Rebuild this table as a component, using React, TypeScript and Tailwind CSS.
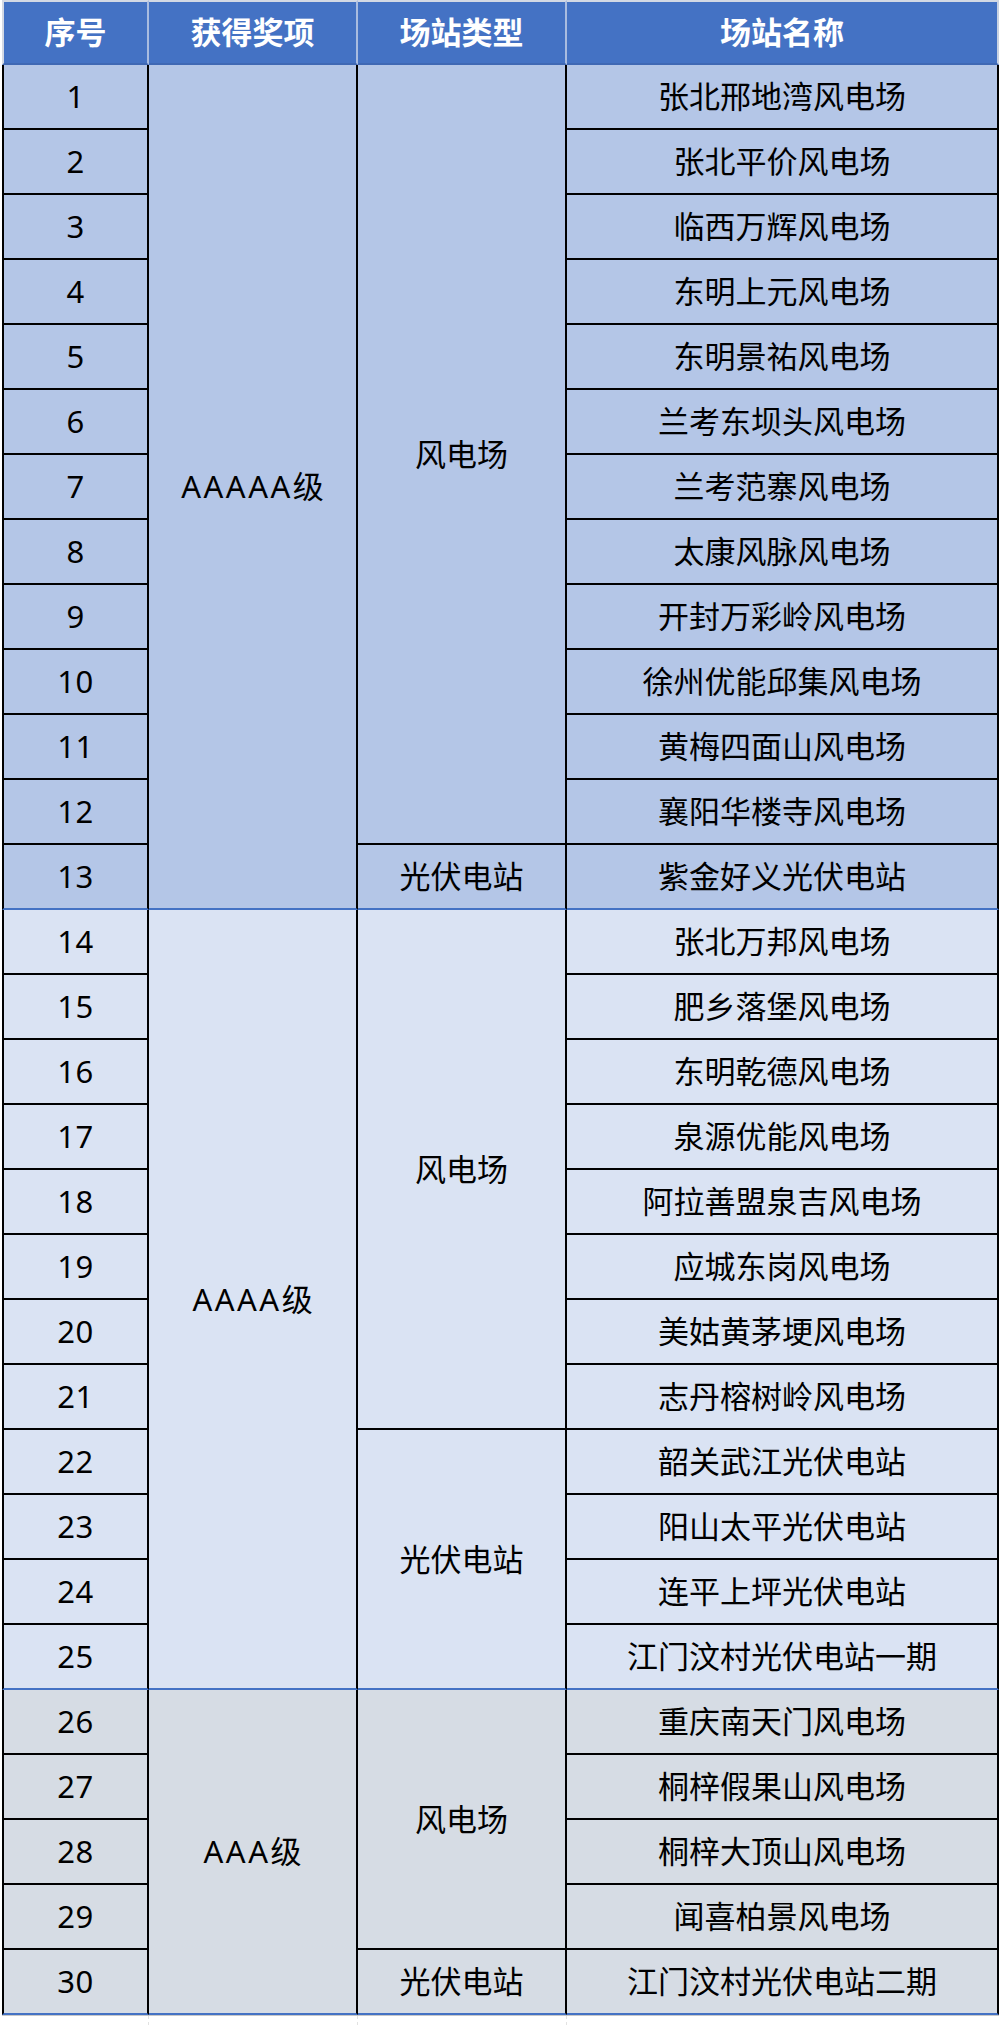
import React from 'react';

type TypeGroup = { t: string; span: string; names: string[] };
type Group = { award: string; bg: string; span: string; types: TypeGroup[] };

const groups: Group[] = [
  {
    award: 'AAAAA',
    bg: 'bg-[#b4c6e7]',
    span: 'row-span-13',
    types: [
      {
        t: '风电场',
        span: 'row-span-12',
        names: [
          '张北邢地湾风电场',
          '张北平价风电场',
          '临西万辉风电场',
          '东明上元风电场',
          '东明景祐风电场',
          '兰考东坝头风电场',
          '兰考范寨风电场',
          '太康风脉风电场',
          '开封万彩岭风电场',
          '徐州优能邱集风电场',
          '黄梅四面山风电场',
          '襄阳华楼寺风电场',
        ],
      },
      { t: '光伏电站', span: 'row-span-1', names: ['紫金好义光伏电站'] },
    ],
  },
  {
    award: 'AAAA',
    bg: 'bg-[#dae3f3]',
    span: 'row-span-12',
    types: [
      {
        t: '风电场',
        span: 'row-span-8',
        names: [
          '张北万邦风电场',
          '肥乡落堡风电场',
          '东明乾德风电场',
          '泉源优能风电场',
          '阿拉善盟泉吉风电场',
          '应城东岗风电场',
          '美姑黄茅埂风电场',
          '志丹榕树岭风电场',
        ],
      },
      {
        t: '光伏电站',
        span: 'row-span-4',
        names: ['韶关武江光伏电站', '阳山太平光伏电站', '连平上坪光伏电站', '江门汶村光伏电站一期'],
      },
    ],
  },
  {
    award: 'AAA',
    bg: 'bg-[#d6dce4]',
    span: 'row-span-5',
    types: [
      {
        t: '风电场',
        span: 'row-span-4',
        names: ['重庆南天门风电场', '桐梓假果山风电场', '桐梓大顶山风电场', '闻喜柏景风电场'],
      },
      { t: '光伏电站', span: 'row-span-1', names: ['江门汶村光伏电站二期'] },
    ],
  },
];

const cellBase = 'flex items-center justify-center border-b-2 border-r-2 border-r-black';

export default function App() {
  const cells: React.ReactNode[] = [];
  let seq = 0;
  groups.forEach((g, gi) => {
    const groupTotal = g.types.reduce((a, t) => a + t.names.length, 0);
    let inGroup = 0;
    g.types.forEach((tg, ti) => {
      tg.names.forEach((name, ni) => {
        seq += 1;
        inGroup += 1;
        const lastInGroup = inGroup === groupTotal;
        const bottom = lastInGroup ? 'border-b-[#4472c4]' : 'border-b-black';
        cells.push(
          <div key={`s${seq}`} className={`${cellBase} ${bottom} ${g.bg} col-start-1 border-l-2 border-l-black`}>
            <span className="tracking-[0.5px]">{seq}</span>
          </div>
        );
        if (ti === 0 && ni === 0) {
          cells.push(
            <div key={`a${gi}`} className={`${cellBase} border-b-[#4472c4] ${g.bg} col-start-2 ${g.span}`}>
              <span className="tracking-[2.5px]">{g.award}</span>
              <span>级</span>
            </div>
          );
        }
        if (ni === 0) {
          const typeLast = ti === g.types.length - 1;
          cells.push(
            <div
              key={`t${gi}-${ti}`}
              className={`${cellBase} ${typeLast ? 'border-b-[#4472c4]' : 'border-b-black'} ${g.bg} col-start-3 ${tg.span}`}
            >
              {tg.t}
            </div>
          );
        }
        cells.push(
          <div key={`n${seq}`} className={`${cellBase} ${bottom} ${g.bg} col-start-4`}>
            {name}
          </div>
        );
      });
    });
  });

  const headers = ['序号', '获得奖项', '场站类型', '场站名称'];

  return (
    <div
      className="w-[1000px] h-[2025px] bg-white text-black text-[31px] leading-none"
      style={{ fontFamily: '"Noto Sans", "Noto Sans CJK SC", sans-serif' }}
    >
      <div className="ml-[2px] grid w-[997px] grid-cols-[147px_209px_209px_432px] auto-rows-[65px]">
        {headers.map((h, i) => (
          <div
            key={h}
            className={`flex items-center justify-center bg-[#4472c4] font-bold text-white border-t-2 border-t-[#d3d9e4] border-b-2 border-b-[#3f68b4] border-r-2 ${
              i === 3 ? 'border-r-[#c9d2e2]' : 'border-r-[#a9bce0]'
            } ${i === 0 ? 'border-l-2 border-l-[#d3d9e4]' : ''}`}
          >
            {h}
          </div>
        ))}
        {cells}
      </div>
      <div className="ml-[2px] flex h-[10px] w-[997px] border-t border-t-[#c8c8c8]">
        <div className="w-[147px] border-r border-dashed border-r-[#e2e2e2]" />
        <div className="w-[209px] border-r border-dashed border-r-[#e2e2e2]" />
        <div className="w-[209px] border-r border-dashed border-r-[#e2e2e2]" />
        <div className="w-[432px]" />
      </div>
    </div>
  );
}
